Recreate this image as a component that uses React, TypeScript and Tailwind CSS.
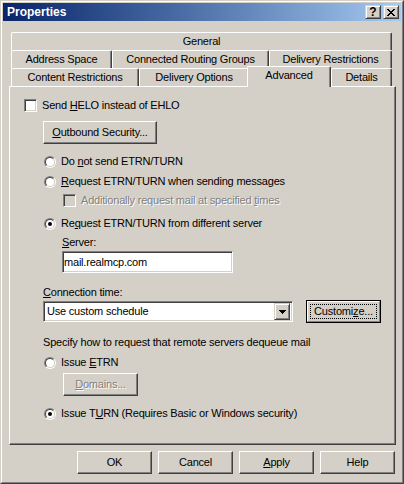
import type { ReactNode } from "react";
import clsx from "clsx";

const raised =
  "border border-t-white border-l-white border-r-[#404040] border-b-[#404040] shadow-[inset_-1px_-1px_0_#808080]";
const sunken =
  "border border-t-[#808080] border-l-[#808080] border-r-white border-b-white shadow-[inset_1px_1px_0_#404040,inset_-1px_-1px_0_#d4d0c8]";
const disabledText = "text-[#808080] [text-shadow:1px_1px_0_#ffffff]";

function Tab({ label, className, selected }: { label: string; className: string; selected?: boolean }) {
  return (
    <div
      className={clsx(
        "flex shrink-0 items-center justify-center rounded-t-[2px] border-t border-l border-r border-t-white border-l-white border-r-[#404040] shadow-[inset_-1px_0_0_#808080]",
        selected ? "relative z-10 -mt-[2px] -ml-[2px] h-[21px] bg-[#d4d0c8] pb-[3px]" : "h-[18px]",
        className,
      )}
    >
      {label}
    </div>
  );
}

function Checkbox({ disabled }: { disabled?: boolean }) {
  return (
    <span
      className={clsx(
        "block h-[13px] w-[13px] shrink-0 border border-t-[#808080] border-l-[#808080] border-r-white border-b-white shadow-[inset_1px_1px_0_#404040,inset_-1px_-1px_0_#d4d0c8]",
        disabled ? "bg-[#d4d0c8]" : "bg-white",
      )}
    />
  );
}

function Radio({ checked }: { checked?: boolean }) {
  return (
    <span className="block h-[12px] w-[12px] shrink-0 rounded-full border border-t-[#808080] border-l-[#808080] border-r-white border-b-white">
      <span className="flex h-full w-full items-center justify-center rounded-full border border-t-[#404040] border-l-[#404040] border-r-[#d4d0c8] border-b-[#d4d0c8] bg-white">
        {checked && <span className="block h-[4px] w-[4px] rounded-full bg-black" />}
      </span>
    </span>
  );
}

function RadioRow({ checked, children, className }: { checked?: boolean; children: ReactNode; className?: string }) {
  return (
    <div className={clsx("ml-[20px] flex h-[13px] items-center gap-[5px]", className)}>
      <Radio checked={checked} />
      <span>{children}</span>
    </div>
  );
}

function Button({ children, className }: { children: ReactNode; className?: string }) {
  return <div className={clsx("flex h-[23px] w-[75px] shrink-0 items-center justify-center", raised, className)}>{children}</div>;
}

function TitleButton({ children }: { children: ReactNode }) {
  return (
    <div className="flex h-[14px] w-[16px] items-center justify-center border border-t-[#d4d0c8] border-l-[#d4d0c8] border-r-[#404040] border-b-[#404040] bg-[#d4d0c8] shadow-[inset_1px_1px_0_#ffffff,inset_-1px_-1px_0_#808080]">
      {children}
    </div>
  );
}

export default function App() {
  return (
    <div className="h-[484px] w-[404px] border border-t-[#d4d0c8] border-l-[#d4d0c8] border-r-[#404040] border-b-[#404040] bg-[#d4d0c8] font-['Liberation_Sans',Arial,sans-serif] text-[11px] leading-[13px] tracking-[-0.2px] text-black">
      <div className="flex h-full flex-col border border-t-white border-l-white border-r-[#808080] border-b-[#808080] p-[1px]">
        <div className="flex h-[18px] shrink-0 items-center bg-linear-to-r from-[#0a246a] to-[#a6caf0] pl-[4px] pr-[2px]">
          <span className="text-[12px] font-bold tracking-[0px] text-white">Properties</span>
          <div className="flex-1" />
          <TitleButton>
            <span className="text-[12px] font-bold leading-none tracking-[0px]">?</span>
          </TitleButton>
          <div className="w-[2px]" />
          <TitleButton>
            <svg width="8" height="7" viewBox="0 0 8 7" shapeRendering="crispEdges">
              <path
                d="M0 0h2v1H0zM6 0h2v1H6zM1 1h2v1H1zM5 1h2v1H5zM2 2h4v1H2zM3 3h2v1H3zM2 4h4v1H2zM1 5h2v1H1zM5 5h2v1H5zM0 6h2v1H0zM6 6h2v1H6z"
                fill="#000"
              />
            </svg>
          </TitleButton>
        </div>

        <div className="mt-[11px] ml-[8px] flex w-[381px] flex-col">
          <div className="flex h-[18px]">
            <Tab label="General" className="w-[381px]" />
          </div>
          <div className="flex h-[18px]">
            <Tab label="Address Space" className="w-[101px]" />
            <Tab label="Connected Routing Groups" className="w-[157px]" />
            <Tab label="Delivery Restrictions" className="w-[123px]" />
          </div>
          <div className="flex h-[18px] items-start">
            <Tab label="Content Restrictions" className="w-[128px]" />
            <Tab label="Delivery Options" className="w-[110px]" />
            <Tab label="Advanced" className="w-[84px]" selected />
            <Tab label="Details" className="w-[61px]" />
          </div>
        </div>

        <div
          className={clsx(
            "ml-[6px] flex h-[359px] w-[387px] shrink-0 flex-col items-start pt-[12px] pl-[14px]",
            raised,
          )}
        >
          <div className="flex h-[13px] items-center gap-[5px]">
            <Checkbox />
            <span>
              Send <u>H</u>ELO instead of EHLO
            </span>
          </div>

          <Button className="mt-[9px] ml-[19px] w-[114px]">
            <span>
              <u>O</u>utbound Security...
            </span>
          </Button>

          <RadioRow className="mt-[11px]">
            Do <u>n</u>ot send ETRN/TURN
          </RadioRow>
          <RadioRow className="mt-[7px]">
            <u>R</u>equest ETRN/TURN when sending messages
          </RadioRow>

          <div className="mt-[6px] ml-[39px] flex h-[13px] items-center gap-[5px]">
            <Checkbox disabled />
            <span className={disabledText}>
              Additionally request mail at specified <u>t</u>imes
            </span>
          </div>

          <RadioRow className="mt-[10px]" checked>
            Re<u>q</u>uest ETRN/TURN from different server
          </RadioRow>

          <div className="mt-[6px] ml-[38px] h-[13px]">
            <u>S</u>erver:
          </div>
          <div className={clsx("mt-[2px] ml-[38px] flex h-[22px] w-[171px] items-center bg-white pl-[1px]", sunken)}>
            mail.realmcp.com
          </div>

          <div className="mt-[13px] ml-[19px] h-[13px]">
            <u>C</u>onnection time:
          </div>
          <div className="mt-[1px] ml-[19px] flex h-[23px] items-center">
            <div className={clsx("flex h-[21px] w-[250px] items-center bg-white p-[2px]", sunken)}>
              <span className="flex-1 pl-[1px]">Use custom schedule</span>
              <div className="flex h-[17px] w-[16px] items-center justify-center border border-t-[#d4d0c8] border-l-[#d4d0c8] border-r-[#404040] border-b-[#404040] bg-[#d4d0c8] shadow-[inset_1px_1px_0_#ffffff,inset_-1px_-1px_0_#808080]">
                <svg width="7" height="4" viewBox="0 0 7 4" shapeRendering="crispEdges">
                  <path d="M0 0h7v1H0zM1 1h5v1H1zM2 2h3v1H2zM3 3h1v1H3z" fill="#000" />
                </svg>
              </div>
            </div>
            <div className="ml-[13px] h-[23px] w-[75px] border border-black">
              <div className="flex h-full w-full items-center justify-center border border-t-white border-l-white border-r-[#808080] border-b-[#808080] p-[2px]">
                <div className="flex h-full w-full items-center justify-center border border-dotted border-black">
                  <span>
                    Customi<u>z</u>e...
                  </span>
                </div>
              </div>
            </div>
          </div>

          <div className="mt-[13px] ml-[19px] h-[13px]">Specify how to request that remote servers dequeue mail</div>

          <RadioRow className="mt-[7px]">
            Issue <u>E</u>TRN
          </RadioRow>

          <Button className="mt-[4px] ml-[39px]">
            <span className={disabledText}>
              <u>D</u>omains...
            </span>
          </Button>

          <RadioRow className="mt-[11px]" checked>
            Issue T<u>U</u>RN (Requires Basic or Windows security)
          </RadioRow>
        </div>

        <div className="mt-[6px] flex justify-end gap-[6px] pr-[6px]">
          <Button>OK</Button>
          <Button>Cancel</Button>
          <Button>
            <span>
              <u>A</u>pply
            </span>
          </Button>
          <Button>Help</Button>
        </div>
      </div>
    </div>
  );
}
